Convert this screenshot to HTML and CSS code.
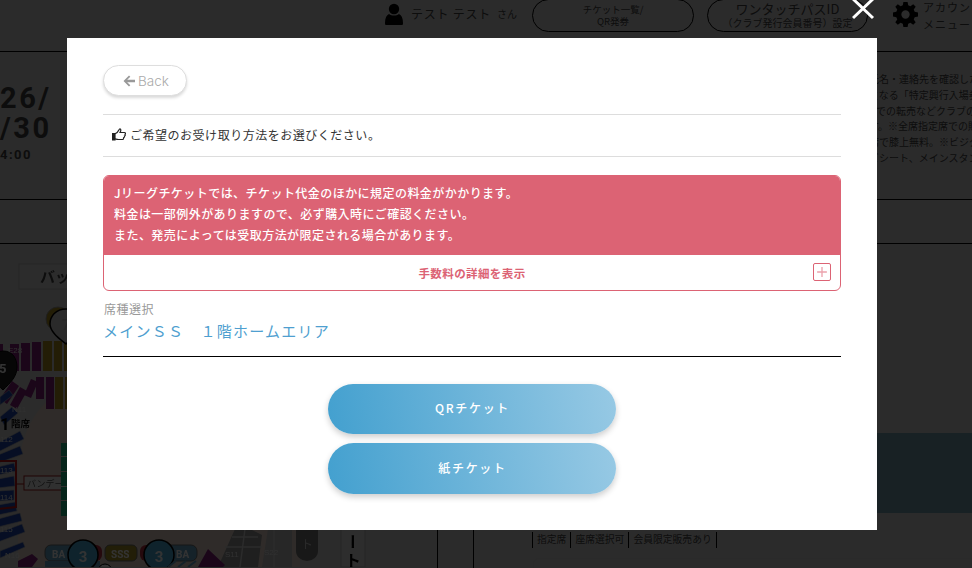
FILE: index.html
```html
<!DOCTYPE html>
<html lang="ja">
<head>
<meta charset="utf-8">
<title>チケット受取方法の選択</title>
<link rel="stylesheet" href="styles.css">
</head>
<body>
<div class="page">
  <header class="site-header">
    <div class="user">
      <svg class="user-icon" viewBox="0 0 18 22"><circle cx="9" cy="6" r="5.2"/><path d="M1 22c-1 0-1-1-1-2 0-5 1.500-8 4-9 1.500 1.200 3 1.600 5 1.600s3.500-.4 5-1.600c2.500 1 4 4 4 9 0 1 0 2-1 2z"/></svg>
      <span class="user-name">テスト テスト</span>
      <span class="user-suffix">さん</span>
    </div>
    <a class="pill pill-tickets">チケット一覧/<br>QR発券</a>
    <a class="pill pill-pass"><span class="pill-big">ワンタッチパスID</span><br>（クラブ発行会員番号）設定</a>
    <div class="account">
      <svg class="gear" viewBox="0 0 24 24"><path d="M10 0h4l.6 3.200 2.100.9L19.400 2.200l2.400 2.400-1.900 2.700.9 2.100L24 10v4l-3.200.6-.9 2.100 1.900 2.700-2.400 2.400-2.700-1.900-2.100.9L14 24h-4l-.6-3.200-2.100-.9-2.700 1.900-2.400-2.400 1.900-2.700-.9-2.100L0 14v-4l3.200-.6.900-2.100L2.200 4.600l2.400-2.400 2.700 1.900 2.100-.9zM12 8a4 4 0 1 0 0 8 4 4 0 0 0 0-8z" fill-rule="evenodd"/></svg>
      <span class="account-label">アカウント<br>メニュー</span>
    </div>
  </header>

  <section class="hero">
    <div class="date">
      <div class="date-big">26/<br>/30</div>
      <div class="date-time">4:00</div>
    </div>
    <div class="notes">
      <div>氏名・連絡先を確認した</div>
      <div>となる「特定興行入場券</div>
      <div class="notes-shift">での転売などクラブの</div>
      <div>す。※全席指定席での購</div>
      <div>席で膝上無料。※ビジタ</div>
      <div>ビシート、メインスタン</div>
    </div>
  </section>

  <div class="subbar"></div>

  <main class="content">
    <div class="map-wrap">
    <svg class="map" viewBox="0 245 437 323">
      <rect x="0" y="245" width="437" height="323" fill="#d4d4d4"/>
      <path d="M18 500C14 450 30 400 70 392L230 392 300 440 300 568 18 568z" fill="#e8d8cc"/>
      <rect x="19" y="265" width="100" height="25" fill="#dcdcdc" stroke="#bcbcbc"/>
      <text x="40" y="283" class="map-title">バック</text>

      <g fill="#86207c">
        <rect x="-6" y="345" width="9" height="30"/><rect x="10" y="345" width="9" height="27"/><rect x="21" y="344" width="9" height="28"/><rect x="32" y="343" width="9" height="29"/>
        <path d="M0 400l12-18 7 5-12 18zM10 406l10-18 7 4-10 18zM24 396l7-16 7 3-7 16z"/>
        <rect x="36" y="378" width="8" height="22"/><rect x="46" y="378" width="8" height="32"/>
      </g>
      <g fill="#b09020">
        <rect x="43" y="342" width="9" height="30"/><rect x="54" y="342" width="8" height="30"/><rect x="64" y="342" width="8" height="30"/>
        <rect x="55" y="378" width="8" height="32"/><rect x="65" y="378" width="8" height="32"/>
      </g>
      <g fill="#1f48b4" stroke="#b8b8b8" stroke-width=".6">
        <path d="M0 418l12-10 6 6-14 12zM0 398l9-7 4 5-13 10z"/>
        <path d="M-2 444l22-12 4 8-26 13z"/>
        <path d="M-2 456l22-9 3 8-25 9z"/>
        <path d="M-2 468l16-4 2 8-18 4z"/>
        <path d="M-2 480l16-3 1 10-17 2z"/>
        <path d="M-2 492l16-1 0 10-16 1z"/>
        <path d="M-2 506l17-3 2 9-19 4z"/>
        <path d="M-2 520l22-6 2 8-24 6z"/>
        <path d="M-2 534l24-9 3 8-27 10z"/>
        <path d="M0 552l23-9 2 5-25 11z"/>
        <path d="M22 566l10-10 5 4-8 8z"/>
      </g>
      <path d="M18 562l14-7 6 5-6 8h-14z" fill="#86207c"/>
      <path d="M-2 462H16V508L-2 510" fill="none" stroke="#c01818" stroke-width="2"/>
      <path d="M16 485H24" stroke="#a01010"/>
      <rect x="24" y="477" width="70" height="14" fill="#f0f0f0" stroke="#a01010"/>
      <text x="27" y="488" class="map-label">バンデーラエリア</text>
      <text x="0" y="431" class="map-one">1</text>
      <text x="11" y="428" class="map-floor">階席</text>
      <text x="8" y="354" class="map-small">E28</text>
      <text x="12" y="413" class="map-small">N11</text>
      <text x="0" y="443" class="map-small">112</text>
      <text x="0" y="474" class="map-small">113</text>
      <text x="0" y="501" class="map-small">114</text>
      <text x="0" y="533" class="map-small">115</text>
      <text x="5" y="559" class="map-small">N16</text>
      <g fill="#20b880">
        <rect x="61" y="444" width="14" height="13"/><rect x="61" y="458" width="14" height="14"/><rect x="61" y="473" width="14" height="14"/><rect x="61" y="488" width="14" height="13"/><rect x="61" y="502" width="14" height="15"/>
      </g>

      <circle cx="58" cy="320" r="12" fill="#b09020" stroke="#999"/>
      <path d="M66 310C56 310 50 317 50 325 50 333 60 340 66 345 72 340 82 333 82 325 82 317 76 310 66 310z" fill="#d0d0d0" stroke="#000" stroke-width="1.500"/>
      <text x="62" y="331" class="map-num">7</text>
      <path d="M3 352C-7 352-14 360-14 368-14 378-4 384 3 391 10 384 17 378 17 368 17 360 13 352 3 352z" fill="#222" stroke="#000"/>
      <text x="-1" y="374" class="map-num-sm">5</text>

      <path d="M218 568L235 530H250L262 536 258 568z" fill="#9a9a9a"/>
      <path d="M262 568L268 530H292V568z" fill="#c0c0c0"/>
      <path d="M225 548H262M232 538H258M274 530V568M245 530L240 568" stroke="#d4d4d4" stroke-width="1.500"/>
      <text x="225" y="558" class="map-small">S11</text>
      <text x="264" y="556" class="map-small">S22</text>
      <path d="M296 530H318V552A11 10 0 0 1 296 552z" fill="#777"/>
      <text x="307" y="550" class="map-dim" text-anchor="middle">ト</text>

      <rect x="45" y="546" width="55" height="16" rx="6" fill="#68a8cc" stroke="#707070"/>
      <text x="52" y="559" class="map-pill">BA</text>
      <path d="M45 562H100V568H45z" fill="#68a8cc"/>
      <rect x="88" y="546" width="14" height="16" rx="6" fill="#b83040"/>
      <circle cx="83" cy="556" r="15" fill="#4ab0dc" stroke="#000" stroke-width="1.500"/>
      <text x="83" y="563" class="map-num-c" text-anchor="middle">3</text>
      <rect x="105" y="546" width="32" height="16" rx="5" fill="#a89428" stroke="#707070"/>
      <text x="111" y="559" class="map-pill">SSS</text>
      <rect x="140" y="546" width="14" height="16" rx="6" fill="#b83040"/>
      <rect x="165" y="546" width="32" height="16" rx="6" fill="#68a8cc" stroke="#707070"/>
      <text x="176" y="559" class="map-pill">BA</text>
      <circle cx="159" cy="556" r="15" fill="#4ab0dc" stroke="#000" stroke-width="1.500"/>
      <text x="159" y="563" class="map-num-c" text-anchor="middle">3</text>
      <circle cx="105" cy="572" r="7" fill="#fff" stroke="#000"/>
      <path d="M198 568L208 550 225 566 223 568z" fill="#86207c"/>
      <path d="M168 568L176 562M178 568L186 562M188 568L196 562" stroke="#68a8cc" stroke-width="2"/>

      <rect x="341" y="500" width="24" height="68" fill="#e0e0e0" stroke="#bbb"/>
      <text x="353" y="543" class="map-side" text-anchor="middle">ー</text>
      <text x="353" y="561" class="map-side" text-anchor="middle">ト</text>
    </svg>
    </div>

    <aside class="detail">
      <div class="detail-stripe"></div>
      <div class="tags">
        <span class="tag">指定席</span><span class="tag">座席選択可</span><span class="tag">会員限定販売あり</span>
      </div>
      <div class="detail-card"></div>
    </aside>
  </main>
</div>

<div class="overlay"></div>

<svg class="close" viewBox="0 0 24 24" aria-label="閉じる"><path d="M1 0L21 19M21 0L1 19"/></svg>

<div class="modal">
  <button class="back">
    <svg class="back-arrow" viewBox="0 0 12 12"><path d="M6 .5L7.300 1.800 4.200 4.700H12V7.300H4.200L7.300 10.200 6 11.500.5 6z"/></svg>
    Back
  </button>

  <p class="lead">
    <svg class="hand" viewBox="0 0 14 13"><path class="hand-cuff" d="M.5 5.500H3V12H.5z"/><path d="M3 5.800C5 5 6.300 3.500 7 1.800 7.300 1 8 .6 8.500 1.200 9 1.900 8.600 3.500 8 4.500H12.500C13.500 4.500 13.800 5.600 13 6.200 13.500 7 13.200 7.800 12.500 8 12.700 8.900 12.300 9.600 11.600 9.800 11.700 10.800 11.200 11.500 10.200 11.500H6.500C5 11.500 4 11 3 10.800"/></svg>
    ご希望のお受け取り方法をお選びください。
  </p>

  <div class="notice">
    <div class="notice-body">
      Jリーグチケットでは、チケット代金のほかに規定の料金がかかります。<br>
      料金は一部例外がありますので、必ず購入時にご確認ください。<br>
      また、発売によっては受取方法が限定される場合があります。
    </div>
    <div class="notice-foot">
      <span>手数料の詳細を表示</span>
      <span class="plus"><svg viewBox="0 0 18 18"><path d="M9 3.500V14.500M3.500 9H14.500"/></svg></span>
    </div>
  </div>

  <div class="seat">
    <div class="seat-label">席種選択</div>
    <div class="seat-name">メインＳＳ　１階ホームエリア</div>
  </div>

  <div class="actions">
    <button class="ticket-btn">QRチケット</button>
    <button class="ticket-btn ticket-btn-tall">紙チケット</button>
  </div>
</div>
</body>
</html>
```
FILE: styles.css
```css
* { box-sizing: border-box; }
html, body { margin: 0; height: 100%; }
body {
  width: 972px;
  height: 568px;
  overflow: hidden;
  position: relative;
  background: #d7d7d7;
  font-family: "Noto Sans CJK JP", "Noto Sans", sans-serif;
  color: #444;
}
.page { height: 568px; overflow: hidden; display: flex; flex-direction: column; }

.site-header {
  height: 52px;
  flex: none;
  border-bottom: 1px solid #000;
  display: flex;
  align-items: flex-start;
  padding-left: 385px;
  white-space: nowrap;
  overflow: hidden;
}
.user { display: flex; align-items: center; height: 27px; width: 147px; flex: none; }
.user-icon { width: 18px; height: 22px; fill: #000; margin-right: 8px; flex: none; }
.user-name { font-size: 12px; letter-spacing: .75px; width: 86px; }
.user-suffix { font-size: 10px; }
.pill {
  flex: none;
  height: 33px;
  margin-top: -1px;
  border: 1px solid #000;
  border-radius: 17px;
  text-align: center;
  font-size: 9.500px;
  line-height: 12px;
  padding-top: 3px;
}
.pill-tickets { width: 162px; margin-right: 13px; }
.pill-pass { width: 161px; margin-right: 25px; font-size: 10px; line-height: 13px; padding-top: 1px; }
.pill-big { font-size: 13px; line-height: 15px; }
.account { display: flex; align-items: flex-start; padding-top: 2px; flex: none; }
.gear { width: 25px; height: 25px; fill: #000; margin-right: 5px; flex: none; }
.account-label { font-size: 11px; line-height: 17px; letter-spacing: 1px; margin-top: -3px; }

.hero {
  height: 148px;
  flex: none;
  border-bottom: 1px solid #000;
  display: flex;
  justify-content: space-between;
  padding-top: 31px;
}
.date { color: #444; font-family: Roboto, sans-serif; font-weight: 700; }
.date-big { font-size: 29px; line-height: 30px; letter-spacing: 2.500px; }
.date-time { font-size: 13px; line-height: 16px; letter-spacing: 1.500px; margin-top: 4px; }
.notes {
  width: 103px;
  overflow: hidden;
  white-space: nowrap;
  font-size: 10px;
  line-height: 15.800px;
  margin-top: -12px;
  color: #444;
}
.notes-shift { padding-left: 7px; }

.subbar { height: 44px; flex: none; border-bottom: 1px solid #000; }

.content { flex: 1; display: flex; min-height: 0; }
.map-wrap { width: 438px; flex: none; border-right: 1px solid #000; }
.map { width: 437px; height: 323px; display: block; filter: blur(.5px); }
.map-title { font-size: 15px; font-weight: 700; fill: #444; }
.map-label { font-size: 9px; fill: #555; }
.map-one { font-size: 17px; font-weight: 700; fill: #000; font-family: Roboto, sans-serif; }
.map-floor { font-size: 9.500px; font-weight: 700; fill: #111; }
.map-small { font-size: 8px; fill: #eee; font-family: "Liberation Sans", sans-serif; }
.map-num { font-size: 14px; font-weight: 700; fill: #bbb; font-family: Roboto, sans-serif; }
.map-num-sm { font-size: 13px; font-weight: 700; fill: #fff; font-family: Roboto, sans-serif; }
.map-num-c { font-size: 15px; font-weight: 700; fill: #fff; font-family: Roboto, sans-serif; }
.map-pill { font-size: 10px; font-weight: 700; fill: #fff; font-family: Roboto, sans-serif; }
.map-dim { font-size: 12px; fill: #ccc; }
.map-side { font-size: 16px; font-weight: 700; fill: #000; writing-mode: vertical-rl; }

.detail {
  flex: 1;
  margin-left: 35px;
  border-left: 1px solid #000;
  padding-left: 59px;
  padding-top: 189px;
}
.detail-stripe {
  height: 80px;
  margin-left: -59px;
  background: #7aa3b5;
}
.tags { display: flex; margin-top: 19px; height: 16px; margin-left: -1px; }
.tag {
  font-size: 9.800px;
  line-height: 15px;
  padding: 0 4px;
  border-left: 1px solid #000;
  color: #444;
  white-space: nowrap;
}
.tag:last-child { border-right: 1px solid #000; }
.detail-card { height: 40px; margin-top: 10px; border: 1px solid #cfcfcf; border-radius: 6px 0 0 0; }

.overlay { position: absolute; inset: 0; background: rgba(0, 0, 0, .8); }
.close {
  position: absolute;
  left: 852px;
  top: -1px;
  width: 24px;
  height: 24px;
  fill: none;
  stroke: #fff;
  stroke-width: 3;
}

.modal {
  position: absolute;
  left: 67px;
  top: 38px;
  width: 810px;
  height: 492px;
  background: #fff;
  padding: 27px 36px 0;
}
.back {
  display: flex;
  align-items: center;
  width: 84px;
  height: 31px;
  padding: 0 0 0 19px;
  background: #fff;
  border: 1px solid #dedede;
  border-radius: 16px;
  box-shadow: 0 2px 3px rgba(0, 0, 0, .15);
  color: #aaa;
  font-family: Inter, sans-serif;
  font-size: 13.500px;
  font-weight: 300;
}
.back-arrow { width: 12px; height: 12px; fill: #999; margin-right: 3px; }
.lead {
  margin: 18px 0 0;
  height: 43px;
  border-top: 1px solid #ddd;
  border-bottom: 1px solid #ddd;
  display: flex;
  align-items: center;
  padding: 0 0 3px 9px;
  font-size: 12px;
  letter-spacing: .52px;
  color: #333;
  gap: 4px;
}
.hand { width: 14px; height: 13px; fill: none; stroke: #222; stroke-width: 1.200; }
.hand-cuff { fill: #222; }
.notice {
  margin-top: 18px;
  height: 116px;
  border: 1px solid #dc6374;
  border-radius: 6px;
  overflow: hidden;
}
.notice-body {
  height: 79px;
  background: #dc6374;
  color: #fff;
  font-size: 12px;
  font-weight: 500;
  letter-spacing: .45px;
  line-height: 21px;
  padding: 6px 0 0 10px;
}
.notice-foot {
  height: 35px;
  display: flex;
  align-items: center;
  justify-content: center;
  position: relative;
  color: #dc6374;
  font-size: 11.500px;
  font-weight: 700;
  letter-spacing: .4px;
}
.plus {
  position: absolute;
  right: 9px;
  top: 8px;
  width: 18px;
  height: 18px;
  border: 1px solid #dc6374;
  border-radius: 2px;
  display: flex;
}
.plus svg { width: 16px; height: 16px; fill: none; stroke: #eca3ad; stroke-width: 1.500; }
.seat {
  height: 66px;
  border-bottom: 1px solid #000;
  padding-top: 9px;
}
.seat-label { font-size: 12px; line-height: 18px; letter-spacing: .5px; color: #999; padding-left: 1px; }
.seat-name { font-size: 15px; line-height: 24px; letter-spacing: 1.250px; color: #4f9fd0; margin-top: 1px; }
.actions {
  margin-top: 27px;
  display: flex;
  flex-direction: column;
  align-items: center;
  gap: 9px;
}
.ticket-btn {
  width: 288px;
  height: 50px;
  border: 0;
  border-radius: 25px;
  background: linear-gradient(80deg, #43a0cf, #97c9e4);
  box-shadow: 0 3px 6px rgba(0, 0, 0, .2);
  color: #fff;
  font-family: "Noto Sans CJK JP", sans-serif;
  font-size: 12px;
  font-weight: 500;
  letter-spacing: 1.700px;
  padding: 0 0 4px 1px;
}
.ticket-btn-tall { height: 51px; border-radius: 26px; padding-bottom: 2px; }
```
